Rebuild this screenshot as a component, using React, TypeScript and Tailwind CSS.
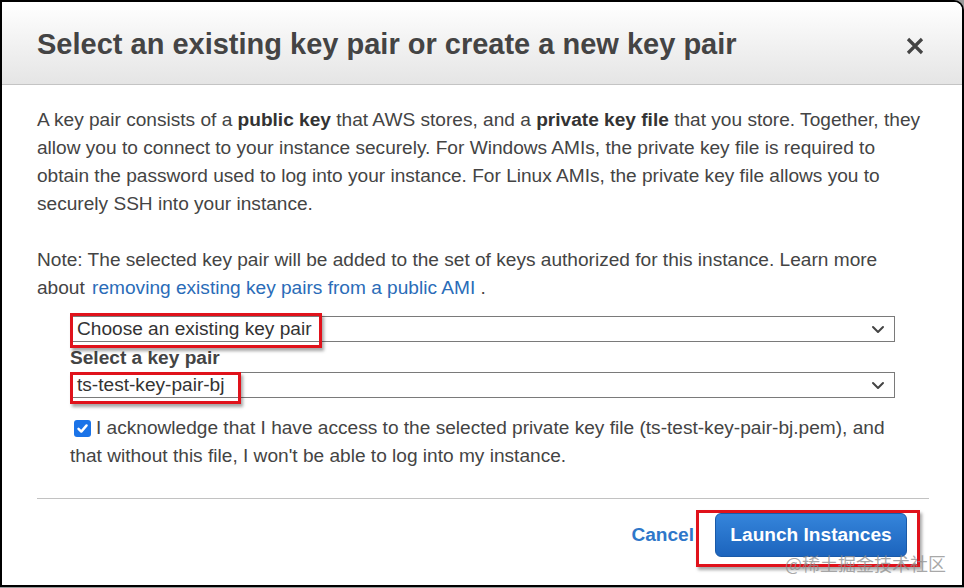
import React from 'react';

const ChevronDown = () => (
  <svg width="14" height="9" viewBox="0 0 14 9" className="text-[#444]">
    <path d="M2 2 L7 7 L12 2" fill="none" stroke="currentColor" strokeWidth="2" strokeLinecap="round" strokeLinejoin="round" />
  </svg>
);

const SelectBox = ({ value }: { value: string }) => (
  <div className="flex h-[26px] w-[825px] items-center justify-between border border-[#7a7a7a] bg-white pl-[6px] pr-[9px] text-[19.1px] text-[#333]">
    <span>{value}</span>
    <ChevronDown />
  </div>
);

export default function App() {
  return (
    <div className="h-[588px] w-[964px] overflow-hidden bg-[#9a9a9a] font-['Liberation_Sans',Arial,sans-serif]">
      <div className="relative flex h-[587px] w-[964px] flex-col overflow-hidden rounded-tr-[10px] border-2 border-black bg-white">
        <header className="flex h-[83px] shrink-0 items-center justify-between border-b border-[#c4c4c4] bg-gradient-to-b from-white to-[#e5e5e5] pl-[35px] pr-[38px]">
          <h1 className="mt-[3px] text-[29px] font-bold text-[#444]">
            Select an existing key pair or create a new key pair
          </h1>
          <svg width="18" height="18" viewBox="0 0 18 18" className="mt-[5px] text-[#444]">
            <path d="M2 2 L16 16 M16 2 L2 16" stroke="currentColor" strokeWidth="3.2" />
          </svg>
        </header>

        <main className="flex flex-1 flex-col px-[35px] pt-[21px] text-[19.1px] leading-[28px] text-[#444]">
          <p>
            A key pair consists of a <b className="text-[#333]">public key</b> that AWS stores, and a{' '}
            <b className="text-[#333]">private key file</b> that you store. Together, they allow you to connect to your
            instance securely. For Windows AMIs, the private key file is required to obtain the password used to log
            into your instance. For Linux AMIs, the private key file allows you to securely SSH into your instance.
          </p>
          <p className="mt-[28px]">
            Note: The selected key pair will be added to the set of keys authorized for this instance. Learn more about{' '}
            <span className="ml-[2px] text-[#2a6cb8]">removing existing key pairs from a public AMI</span> .
          </p>

          <div className="mt-[14px] flex flex-col pl-[33px]">
            <div className="relative">
              <SelectBox value="Choose an existing key pair" />
              <div className="absolute left-0 top-[-3px] h-[35px] w-[252px] border-[3px] border-[#e0121b] shadow-[2px_3px_3px_rgba(0,0,0,0.35)]" />
            </div>
            <div className="mt-[2px] text-[19.1px] font-bold leading-[28px] text-[#444]">Select a key pair</div>
            <div className="relative">
              <SelectBox value="ts-test-key-pair-bj" />
              <div className="absolute left-0 top-0 h-[32px] w-[171px] border-[3px] border-[#e0121b] shadow-[2px_3px_3px_rgba(0,0,0,0.35)]" />
            </div>
            <div className="mt-[16px] pr-[32px]">
              <span className="mr-[5px] ml-[4px] inline-flex h-[17px] w-[17px] items-center justify-center rounded-[3px] bg-[#1a73e8] align-[-1px]">
                <svg width="13" height="13" viewBox="0 0 13 13">
                  <path d="M2.5 6.8 L5.3 9.6 L10.6 3.4" fill="none" stroke="white" strokeWidth="2.4" strokeLinecap="round" strokeLinejoin="round" />
                </svg>
              </span>
              I acknowledge that I have access to the selected private key file (ts-test-key-pair-bj.pem), and that
              without this file, I won't be able to log into my instance.
            </div>
          </div>

          <div className="mt-[28px] mr-[-2px] border-t border-[#c2c2c2]" />

          <footer className="flex items-center justify-end pr-[20px] pt-[14px]">
            <span className="mr-[21px] text-[19.1px] font-bold text-[#2f77c9]">Cancel</span>
            <div className="relative">
              <button className="h-[44px] w-[192px] rounded-[6px] border border-[#1a5aa8] bg-gradient-to-b from-[#3585db] to-[#1c64bd] text-[19.1px] font-bold text-white">
                Launch Instances
              </button>
              <div className="absolute left-[-19px] top-[-3px] h-[57px] w-[224px] border-[3px] border-[#e0121b] shadow-[2px_3px_3px_rgba(0,0,0,0.35)]" />
            </div>
          </footer>

          <div className="absolute left-[783px] top-[549px] whitespace-nowrap font-['Noto_Sans_CJK_SC',sans-serif] text-[18px] leading-[24px] text-[rgba(140,140,140,0.75)]">
            @稀土掘金技术社区
          </div>
        </main>
      </div>
    </div>
  );
}
